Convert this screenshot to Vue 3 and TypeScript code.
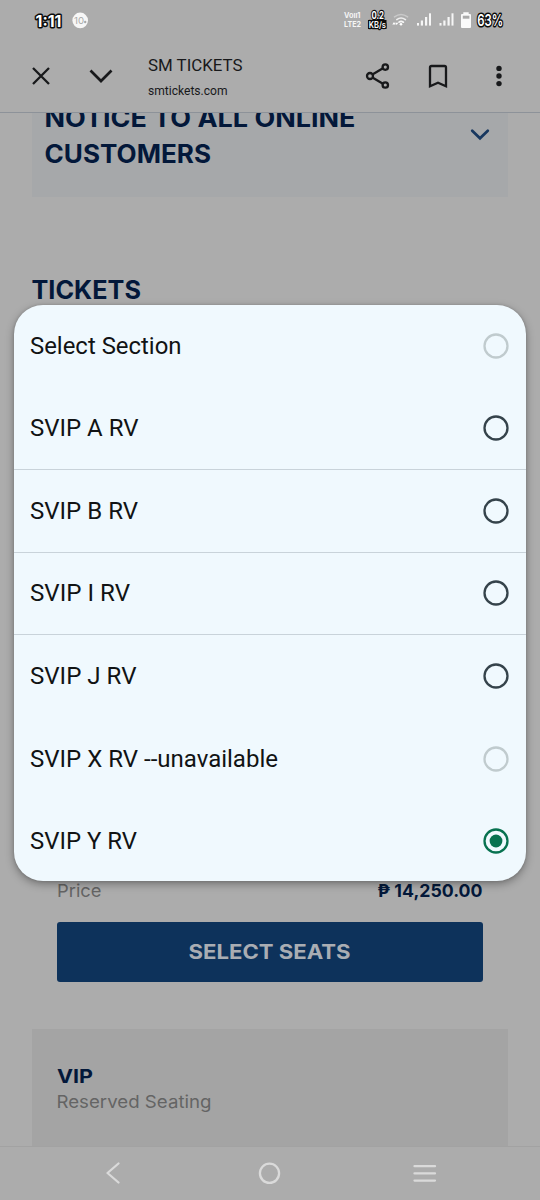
<script setup lang="ts">
interface Option {
  label: string
  width: number
  disabled?: boolean
  divider?: boolean
  selected?: boolean
}

const options: Option[] = [
  { label: 'Select Section', width: 151.5, disabled: true },
  { label: 'SVIP A RV', width: 108.5, divider: true },
  { label: 'SVIP B RV', width: 108, divider: true },
  { label: 'SVIP I RV', width: 100, divider: true },
  { label: 'SVIP J RV', width: 106.5 },
  { label: 'SVIP X RV --unavailable', width: 248, disabled: true },
  { label: 'SVIP Y RV', width: 107, selected: true },
]
</script>

<template>
  <div class="screen">
    <header class="top">
      <div class="status">
        <svg class="clock" width="60" height="40" viewBox="0 0 60 40">
          <text class="outlined" x="2.5" y="27" font-size="16" font-weight="700" textLength="26" lengthAdjust="spacingAndGlyphs">1:11</text>
          <circle cx="47.2" cy="20.4" r="7.8" fill="#f7f7f7" />
          <text x="41" y="24" font-size="9.5" fill="#aaa" textLength="10" lengthAdjust="spacingAndGlyphs">10</text>
          <circle cx="52.2" cy="22" r="1.2" fill="#aaa" />
        </svg>
        <svg class="indicators" width="170" height="40" viewBox="340 0 170 40">
          <g fill="#f5f5f5" font-weight="700">
            <text x="344" y="18.4" font-size="7.4" textLength="16.5" lengthAdjust="spacingAndGlyphs">Vo<tspan>ıı</tspan>1</text>
            <text x="344" y="26.6" font-size="7.4" textLength="17" lengthAdjust="spacingAndGlyphs">LTE2</text>
          </g>
          <rect x="368" y="20" width="18.5" height="9" fill="#0b0b0b" />
          <text class="outlined thin" x="371.5" y="18.6" font-size="9.8" font-weight="700" textLength="12.5" lengthAdjust="spacingAndGlyphs">0.2</text>
          <text class="outlined thin" x="368.8" y="27.8" font-size="9" font-weight="600" textLength="17.2" lengthAdjust="spacingAndGlyphs">KB/s</text>
          <g fill="none" stroke-linecap="round">
            <path d="M394.5 16.8Q401 12.1 407.6 16.8" stroke="#c9c9c9" stroke-width="1.6" />
            <path d="M396.8 19.6Q401 16.4 405.4 19.6" stroke="#eee" stroke-width="1.7" />
            <path d="M399 22.2Q401 20.4 403.4 22.2" stroke="#f5f5f5" stroke-width="1.7" />
          </g>
          <circle cx="401" cy="24.2" r="1.3" fill="#fff" />
          <path d="M394 22l1.7 2.4h-3.4zM396.7 25l1.6-2.2h-3.2z" fill="#fff" />
          <g fill="#f6f6f6">
            <rect x="417" y="23" width="2" height="2.6" /><rect x="420.8" y="20.5" width="2.2" height="5.1" /><rect x="425" y="17" width="2.2" height="8.6" /><rect x="429" y="13.3" width="2" height="12.3" />
            <rect x="439.5" y="23" width="2" height="2.6" /><rect x="443.3" y="20.5" width="2.2" height="5.1" /><rect x="447.5" y="17" width="2.2" height="8.6" /><rect x="451.5" y="13.3" width="2" height="12.3" />
          </g>
          <path d="M463.3 12.3h5.4v1.6h1.3q1 0 1 1V27q0 1-1 1h-8q-1 0-1-1V14.9q0-1 1-1h1.3z" fill="#fafafa" />
          <rect x="462.8" y="15.7" width="6.6" height="3" fill="#aaa" />
          <text class="outlined" x="477.2" y="26.3" font-size="15.5" font-weight="600" textLength="26" lengthAdjust="spacingAndGlyphs">63%</text>
        </svg>
      </div>
      <div class="toolbar">
        <svg class="close" width="18" height="18" viewBox="0 0 18 18"><path d="M1 1l16 16M17 1L1 17" /></svg>
        <svg class="collapse" width="24" height="14" viewBox="0 0 24 14"><path d="M1.5 1.5L12 12 22.5 1.5" /></svg>
        <div class="site">
          <svg width="100" height="26" viewBox="0 0 100 26"><text class="roboto" x="0" y="20" font-size="17.3" fill="#18191b" textLength="94.5" lengthAdjust="spacingAndGlyphs">SM TICKETS</text></svg>
          <svg width="100" height="22" viewBox="0 0 100 22"><text class="roboto" x="0" y="18" font-size="12.6" fill="#18191b" textLength="79.5" lengthAdjust="spacingAndGlyphs">smtickets.com</text></svg>
        </div>
        <svg class="share" width="26" height="28" viewBox="365 62 26 28">
          <path d="M372.4 74.5L382.5 68.6M372.4 77.5L382.5 83.4" /><circle cx="370" cy="76" r="3" /><circle cx="385.3" cy="67.1" r="2.7" /><circle cx="385.3" cy="85" r="2.7" />
        </svg>
        <svg class="bookmark" width="20" height="24" viewBox="0 0 20 24"><path d="M2 22.2V3.5Q2 2 3.5 2H16.5Q18 2 18 3.5V22.2L10 18.7Z" /></svg>
        <svg class="more" width="8" height="22" viewBox="0 0 8 22"><circle cx="4" cy="3.4" r="2.7" /><circle cx="4" cy="11" r="2.7" /><circle cx="4" cy="18.6" r="2.7" /></svg>
      </div>
    </header>

    <main class="page">
      <section class="notice">
        <svg class="notice-title" width="330" height="72" viewBox="0 0 330 72">
          <text class="head" x="-0.5" y="14.2" font-size="25" textLength="311" lengthAdjust="spacingAndGlyphs">NOTICE TO ALL ONLINE</text>
          <text class="head" x="-0.5" y="49.8" font-size="25" textLength="166.5" lengthAdjust="spacingAndGlyphs">CUSTOMERS</text>
        </svg>
        <svg class="notice-arrow" width="20" height="14" viewBox="0 0 20 14"><path d="M2.2 2.8L10 10.3 17.8 2.8" /></svg>
      </section>
      <svg class="tickets" width="120" height="30" viewBox="0 0 120 30"><text class="head" x="-0.5" y="22.3" font-size="25" textLength="109.5" lengthAdjust="spacingAndGlyphs">TICKETS</text></svg>

      <section class="purchase">
        <div class="price">
          <svg width="60" height="24" viewBox="0 0 60 24"><text x="0" y="16" font-size="17.6" fill="#646464" textLength="44.5" lengthAdjust="spacingAndGlyphs">Price</text></svg>
          <svg width="110" height="24" viewBox="0 0 110 24">
            <text class="head" x="4.5" y="16" font-size="17.6" textLength="105" lengthAdjust="spacingAndGlyphs">₱ 14,250.00</text>
          </svg>
        </div>
        <button class="seats" type="button">
          <svg width="164" height="30" viewBox="0 0 164 30"><text x="0.5" y="21.6" font-size="19.6" font-weight="700" fill="#a9adb3" textLength="162" lengthAdjust="spacingAndGlyphs">SELECT SEATS</text></svg>
        </button>
      </section>

      <section class="vip">
        <svg width="170" height="60" viewBox="0 0 170 60">
          <text class="head" x="0" y="24" font-size="19.3" textLength="36" lengthAdjust="spacingAndGlyphs">VIP</text>
          <text x="-0.5" y="48.5" font-size="17.6" fill="#646464" textLength="155" lengthAdjust="spacingAndGlyphs">Reserved Seating</text>
        </svg>
      </section>
    </main>

    <nav class="system">
      <svg width="24" height="24" viewBox="0 0 24 24"><path d="M17.5 2.5L6.5 12 17.5 21.5" /></svg>
      <svg width="24" height="24" viewBox="0 0 24 24"><circle cx="12.5" cy="12.3" r="9.6" /></svg>
      <svg width="24" height="24" viewBox="0 0 24 24"><path d="M1.5 5.2H22M1.5 12.4H22M1.5 19.6H22" /></svg>
    </nav>

    <div class="dialog" role="radiogroup">
      <div v-for="option in options" :key="option.label" class="option" :class="{ divider: option.divider }">
        <svg width="260" height="34" viewBox="0 0 260 34"><text class="roboto" x="0" y="25.4" font-size="24" fill="#111314" :textLength="option.width" lengthAdjust="spacingAndGlyphs">{{ option.label }}</text></svg>
        <svg class="radio" :class="{ disabled: option.disabled, selected: option.selected }" width="28" height="28" viewBox="0 0 28 28">
          <circle cx="14" cy="14" r="11.5" />
          <circle v-if="option.selected" class="dot" cx="14" cy="14" r="6.4" />
        </svg>
      </div>
    </div>
  </div>
</template>

<style>
body {
  margin: 0;
  background: #acacac;
}
</style>

<style scoped>
.screen {
  position: relative;
  display: flex;
  flex-direction: column;
  width: 540px;
  height: 1200px;
  overflow: hidden;
  background: #acacac;
  font-family: Inter, "Liberation Sans", sans-serif;
}
svg {
  display: block;
  flex: none;
  overflow: visible;
}
.roboto {
  font-family: Roboto, sans-serif;
}
.head {
  font-weight: 700;
  fill: #03183a;
}
.outlined {
  fill: #fff;
  stroke: #0b0b0b;
  stroke-width: 3px;
  stroke-linejoin: round;
  paint-order: stroke;
}
.outlined.thin {
  stroke-width: 2.4px;
}
.top {
  box-sizing: border-box;
  height: 113px;
  flex: none;
  border-bottom: 1px solid #8d9299;
}
.status {
  display: flex;
  justify-content: space-between;
  height: 40px;
  padding: 0 30px 0 33px;
}
.toolbar {
  display: flex;
  align-items: center;
  height: 72px;
  padding-left: 32px;
}
.toolbar path,
.toolbar circle {
  fill: none;
  stroke: #18191b;
  stroke-width: 2.3;
}
.toolbar .collapse {
  margin-left: 39px;
}
.toolbar .collapse path {
  stroke-width: 2.7;
}
.site {
  width: 180px;
  height: 50px;
  margin-left: 35px;
}
.share {
  margin-left: 37px;
}
.bookmark {
  margin-left: 37px;
}
.more {
  margin-left: 47px;
}
.toolbar .more circle {
  fill: #18191b;
  stroke: none;
}
.page {
  display: flex;
  flex: 1;
  flex-direction: column;
  overflow: hidden;
}
.notice {
  display: flex;
  flex: none;
  justify-content: space-between;
  width: 476px;
  height: 84px;
  margin-left: 32px;
  box-sizing: border-box;
  padding: 0 18px 0 13px;
  background: #a6a8aa;
}
.notice-arrow {
  margin-top: 15px;
}
.notice-arrow path {
  fill: none;
  stroke: #17375f;
  stroke-width: 2.7;
  stroke-linecap: round;
}
.tickets {
  margin: 80px 0 0 32px;
}
.purchase {
  margin: 574px 57px 0;
}
.price {
  display: flex;
  justify-content: space-between;
  height: 41px;
}
.seats {
  display: flex;
  align-items: center;
  justify-content: center;
  width: 426px;
  height: 60px;
  padding: 0;
  border: 0;
  border-radius: 3px;
  background: #0d325b;
  font-family: inherit;
}
.vip {
  flex: 1;
  margin: 47px 32px 0 32px;
  padding: 30px 25px 0;
  background: #a4a4a4;
}
.system {
  display: flex;
  flex: none;
  box-sizing: border-box;
  height: 54px;
  padding: 14px 103px 0 101px;
  justify-content: space-between;
  border-top: 1px solid #a2a2a2;
}
.system path,
.system circle {
  fill: none;
  stroke: #dadada;
  stroke-width: 2.3;
  stroke-linecap: round;
  stroke-linejoin: round;
}
.dialog {
  position: absolute;
  top: 305px;
  left: 14px;
  width: 512px;
  height: 576px;
  overflow: hidden;
  border-radius: 29px;
  background: #f0f9fe;
  box-shadow: 0 3px 9px rgba(0, 0, 0, 0.34), 0 0 3px rgba(0, 0, 0, 0.15);
}
.option {
  display: flex;
  align-items: center;
  justify-content: space-between;
  box-sizing: border-box;
  height: 82.5px;
  padding: 0 16px 0 15.5px;
}
.divider {
  border-bottom: 1px solid #c9d3da;
}
.radio circle {
  fill: none;
  stroke: #35434b;
  stroke-width: 2.3;
}
.radio.disabled circle {
  stroke: #c0cbce;
}
.radio.selected circle {
  stroke: #087250;
}
.radio.selected .dot {
  fill: #087250;
  stroke: none;
}
</style>
